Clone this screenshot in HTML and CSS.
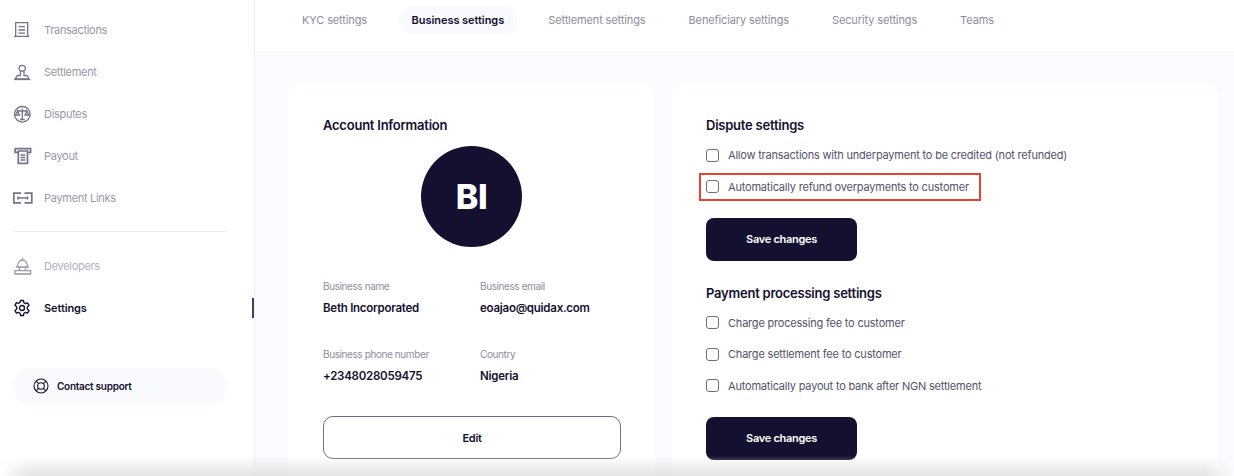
FILE: index.html
```html
<!DOCTYPE html>
<html>
<head>
    <meta charset="UTF-8">
    <title>Business settings</title>
    <link rel="stylesheet" href="styles.css">
</head>
<body>
<div class="page">
    <!-- Sidebar -->
    <aside class="sidebar">
        <nav class="nav-group">
            <a class="nav-item">
                <svg class="nav-icon" viewBox="0 0 20 20"><path d="M3.700 16V2.700h12V16M2 16.300h15.300M6.500 6.700h6.500M6.500 10h6.500M6.500 13.200h6.500"/></svg>
                <span>Transactions</span>
            </a>
            <a class="nav-item">
                <svg class="nav-icon" viewBox="0 0 20 20"><path d="M8.400 9c-1-.6-1.400-1.500-1.400-2.500a3.200 3.200 0 0 1 6.400 0c0 1-.4 1.900-1.400 2.500v4.500H15l2 3.500H3.300l2-3.500h3.100zM8.400 9h3.600"/><path d="M2 17.500h16.300"/></svg>
                <span>Settlement</span>
            </a>
            <a class="nav-item">
                <svg class="nav-icon" viewBox="0 0 20 20"><circle cx="10.300" cy="10.300" r="7.800"/><path d="M10.300 4.500v11M7.800 15.500h5M5 7h10.500M5.500 7l-2 4h4zM15 7l-2 4h4z"/></svg>
                <span>Disputes</span>
            </a>
            <a class="nav-item">
                <svg class="nav-icon nav-icon-heavy" viewBox="0 0 20 20"><path d="M3 2.600h15.600v3.800h-2.900M6 6.400H3V2.600M6.300 5h9.200v12.300H6.300zM8.500 9h4.800M8.500 11.500h4.800M8.500 14h4.800"/></svg>
                <span>Payout</span>
            </a>
            <a class="nav-item">
                <svg class="nav-icon nav-icon-heavy" viewBox="0 0 20 20"><path d="M9 5.200H1.800v9.600H9M12.500 5.200h7.300v9.600h-7.300M6 8.500v3M15.500 8.500v3M6 10h9.500"/></svg>
                <span>Payment Links</span>
            </a>
        </nav>
        <hr class="nav-divider">
        <nav class="nav-group">
            <a class="nav-item nav-item-faded">
                <svg class="nav-icon" viewBox="0 0 20 20"><path d="M10.500 2v1.500M5.500 11c0-4.200 2.200-7 5-7s5 2.800 5 7M4 11h13M7.500 11v3.500M13.500 11v3.500M3 14.700h15.600V18H3z"/></svg>
                <span>Developers</span>
            </a>
            <a class="nav-item nav-item-active">
                <svg class="nav-icon nav-icon-gear" viewBox="-2 -2 28 28"><circle cx="12" cy="12" r="3.500"/><path d="M10 1.500h4l.7 3.200 2 1.200 3.100-1 2 3.500-2.400 2.200v2.800l2.400 2.200-2 3.500-3.100-1-2 1.200-.7 3.200h-4l-.7-3.200-2-1.200-3.100 1-2-3.500 2.400-2.200v-2.800L2.200 7.900l2-3.500 3.100 1 2-1.200z"/></svg>
                <span>Settings</span>
            </a>
        </nav>
        <a class="support">
            <svg class="support-icon" viewBox="0 0 24 24"><circle cx="12" cy="12" r="10.500"/><circle cx="12" cy="12" r="5"/><path d="M4.600 4.600l3.900 3.900M19.400 4.600l-3.900 3.900M4.600 19.400l3.900-3.900M19.400 19.400l-3.900-3.900"/></svg>
            <span>Contact support</span>
        </a>
        <div class="scroll-mark"></div>
    </aside>

    <main class="main">
        <!-- Tabs -->
        <div class="tabs">
            <a class="tab">KYC settings</a>
            <a class="tab tab-active">Business settings</a>
            <a class="tab">Settlement settings</a>
            <a class="tab">Beneficiary settings</a>
            <a class="tab">Security settings</a>
            <a class="tab">Teams</a>
        </div>

        <div class="content">
            <!-- Account Information -->
            <section class="card card-account">
                <h2 class="card-title">Account Information</h2>
                <div class="avatar">BI</div>
                <div class="details">
                    <div class="detail">
                        <div class="detail-label">Business name</div>
                        <div class="detail-value">Beth Incorporated</div>
                    </div>
                    <div class="detail">
                        <div class="detail-label">Business email</div>
                        <div class="detail-value">eoajao@quidax.com</div>
                    </div>
                    <div class="detail">
                        <div class="detail-label">Business phone number</div>
                        <div class="detail-value">+2348028059475</div>
                    </div>
                    <div class="detail">
                        <div class="detail-label">Country</div>
                        <div class="detail-value">Nigeria</div>
                    </div>
                </div>
                <button class="button button-outline">Edit</button>
            </section>

            <!-- Settings -->
            <section class="card card-settings">
                <h2 class="card-title">Dispute settings</h2>
                <div class="checks">
                    <label class="check"><span class="check-box"></span>Allow transactions with underpayment to be credited (not refunded)</label>
                    <label class="check check-marked"><span class="check-box"></span>Automatically refund overpayments to customer</label>
                </div>
                <button class="button button-dark">Save changes</button>

                <h2 class="card-title card-title-second">Payment processing settings</h2>
                <div class="checks">
                    <label class="check"><span class="check-box"></span>Charge processing fee to customer</label>
                    <label class="check"><span class="check-box"></span>Charge settlement fee to customer</label>
                    <label class="check"><span class="check-box"></span>Automatically payout to bank after NGN settlement</label>
                </div>
                <button class="button button-dark">Save changes</button>
            </section>
        </div>
    </main>

    <!-- Fade at the bottom of the window -->
    <div class="bottom-fade"></div>
</div>
</body>
</html>
```

FILE: styles.css
```css
* {
    box-sizing: border-box;
}

html, body {
    margin: 0;
    height: 100%;
    overflow: hidden;
}

body {
    font-family: Inter, "Liberation Sans", sans-serif;
    font-size: 11px;
    color: #14102f;
    background-color: #fff;
}

.page {
    position: relative;
    display: flex;
    height: 476px;
    overflow: hidden;
}

/* Sidebar */
.sidebar {
    position: relative;
    flex: 0 0 255px;
    padding: 9px 27px 0 13px;
    border-right: 1px solid #ededf2;
}

.nav-group {
    display: flex;
    flex-direction: column;
}

.nav-item {
    display: flex;
    align-items: center;
    height: 42px;
    font-size: 11px;
    letter-spacing: -0.3px;
    color: #9a97a9;
}

.nav-icon {
    flex: none;
    width: 20px;
    height: 20px;
    margin: 0 12px 0 -1px;
    overflow: visible;
    fill: none;
    stroke: #75728a;
    stroke-width: 1.300;
}

.nav-icon-heavy {
    stroke-width: 1.700;
}

.nav-icon-gear {
    stroke-width: 1.900;
    stroke-linejoin: round;
}

.nav-divider {
    height: 1px;
    margin: 12px 0 13px;
    border: 0;
    background-color: #ececf1;
}

.nav-item-faded {
    color: #b3b1bf;
}

.nav-item-faded .nav-icon {
    stroke: #9a97a9;
}

.nav-item-active {
    font-weight: 600;
    letter-spacing: -0.1px;
    color: #14102f;
}

.nav-item-active .nav-icon {
    stroke: #14102f;
}

.support {
    display: flex;
    align-items: center;
    height: 36px;
    margin-top: 39px;
    padding-left: 20px;
    font-size: 10px;
    font-weight: 600;
    letter-spacing: -0.27px;
    border-radius: 18px;
    background-color: #f9fafd;
}

.support-icon {
    width: 16px;
    height: 16px;
    margin-right: 8px;
    fill: none;
    stroke: #14102f;
    stroke-width: 1.600;
}

.scroll-mark {
    position: absolute;
    top: 298px;
    right: 0;
    width: 2px;
    height: 20px;
    background-color: #45425a;
}

/* Tabs */
.main {
    flex: 1;
    display: flex;
    flex-direction: column;
    min-width: 0;
}

.tabs {
    flex: none;
    display: flex;
    gap: 17px;
    height: 51px;
    padding: 6px 0 0 34px;
}

.tab {
    height: 28px;
    padding: 0 13px;
    font-size: 11px;
    line-height: 28px;
    letter-spacing: -0.12px;
    color: #8f8ca0;
}

.tab-active {
    margin: 0 1px 0 1.500px;
    font-weight: 600;
    letter-spacing: -0.05px;
    color: #14102f;
    border-radius: 14px;
    background-color: #f9fafd;
}

.content {
    flex: 1;
    display: flex;
    align-items: flex-start;
    gap: 17px;
    padding: 33px 16px 0 33px;
    background-color: #fafbfe;
}

/* Cards */
.card {
    height: 420px;
    padding: 33px 34px;
    border-radius: 10px;
    background-color: #fff;
}

.card-account {
    flex: 0 0 367px;
    padding-left: 35px;
}

.card-settings {
    flex: 1;
}

.card-title {
    margin: 0;
    font-size: 13px;
    font-weight: 600;
    line-height: 16px;
    letter-spacing: -0.23px;
    color: #14102f;
}

.card-title-second {
    margin-top: 24px;
}

.avatar {
    width: 101px;
    height: 101px;
    margin: 13px 0 0 98px;
    font-size: 34px;
    font-weight: 800;
    line-height: 101px;
    letter-spacing: -0.5px;
    text-align: center;
    color: #fff;
    border-radius: 50%;
    background-color: #14102f;
}

.details {
    display: grid;
    grid-template-columns: 157px 1fr;
    row-gap: 32px;
    margin-top: 32px;
}

.detail-label {
    font-size: 10px;
    line-height: 14px;
    letter-spacing: -0.4px;
    color: #8f8ca0;
}

.detail-value {
    margin-top: 8px;
    font-size: 11.500px;
    font-weight: 600;
    line-height: 14px;
    letter-spacing: -0.25px;
}

/* Buttons */
.button {
    display: block;
    font-family: inherit;
    font-size: 11px;
    font-weight: 600;
    letter-spacing: -0.3px;
    height: 43px;
    border-radius: 8px;
}

.button-outline {
    width: 298px;
    margin-top: 33px;
    color: #14102f;
    border: 1px solid #6f6c85;
    border-radius: 10px;
    background-color: #fff;
}

.button-dark {
    width: 151px;
    margin-top: 17px;
    color: #fff;
    border: none;
    background-color: #14102f;
}

/* Checkboxes */
.checks {
    display: flex;
    flex-direction: column;
    gap: 3.500px;
    margin-top: 8px;
}

.check {
    display: flex;
    align-items: center;
    height: 28px;
    font-size: 11px;
    letter-spacing: -0.2px;
    color: #55526a;
}

.check-box {
    flex: none;
    width: 13px;
    height: 13px;
    margin-right: 9px;
    border: 1px solid #6f6c85;
    border-radius: 3px;
}

.check-marked {
    width: 282px;
    margin-left: -7px;
    padding-left: 7px;
    outline: 2px solid #e8432e;
    outline-offset: -2px;
}

.bottom-fade {
    position: absolute;
    left: 0;
    right: 0;
    bottom: 0;
    height: 20px;
    background: linear-gradient(rgba(226, 226, 228, 0), rgba(226, 226, 228, 0.95));
    -webkit-mask-image: linear-gradient(90deg, transparent, #000 30px, #000 1205px, transparent);
    mask-image: linear-gradient(90deg, transparent, #000 30px, #000 1205px, transparent);
    pointer-events: none;
}
```
